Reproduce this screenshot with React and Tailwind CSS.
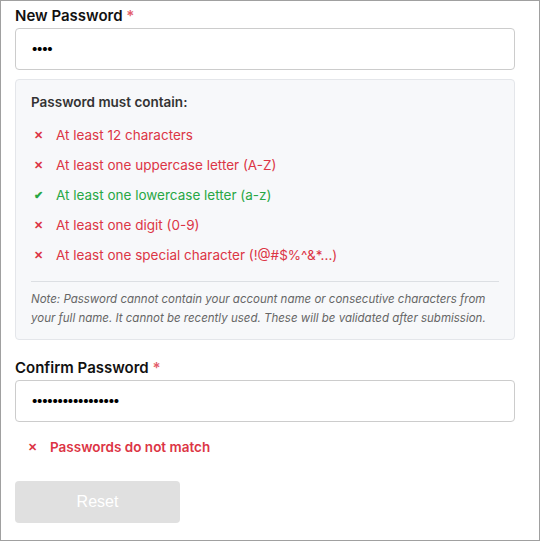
import React from "react";

const rules = [
  { ok: false, text: "At least 12 characters" },
  { ok: false, text: "At least one uppercase letter (A-Z)" },
  { ok: true, text: "At least one lowercase letter (a-z)" },
  { ok: false, text: "At least one digit (0-9)" },
  { ok: false, text: "At least one special character (!@#$%^&*...)" },
];

function Label({ children }) {
  return (
    <div className="text-[15px] font-semibold leading-5 text-[#111]">
      {children} <span className="text-[#e35d6a]">*</span>
    </div>
  );
}

function PasswordBox({ dots }) {
  return (
    <div className="h-[42px] rounded-[4px] border border-[#cccccc] bg-white flex items-center px-[15px] text-[13px] text-black tracking-[-2.2px]">
      {"•".repeat(dots)}
    </div>
  );
}

export default function App() {
  return (
    <div
      className="w-[540px] h-[541px] border border-[#a0a0a0] bg-white pl-[14px] pt-[5px]"
      style={{ fontFamily: "Inter, 'Noto Sans', sans-serif" }}
    >
      <div className="w-[500px]">
        <Label>New Password</Label>
        <div className="mt-[2px]">
          <PasswordBox dots={4} />
        </div>

        {/* requirements */}
        <div className="mt-[9px] rounded-[4px] border border-[#e4e6ea] bg-[#f7f8fa] px-[15px] pt-[13px] pb-[11px]">
          <div className="text-[13.5px] font-semibold leading-[18px] text-[#333]">
            Password must contain:
          </div>
          <ul className="mt-[9px]">
            {rules.map((r) => (
              <li
                key={r.text}
                className={`flex items-center leading-[30px] text-[13.5px] ${
                  r.ok ? "text-[#28a745]" : "text-[#dc3545]"
                }`}
              >
                <span className="w-[25px] pl-[3px] text-[11px] font-bold">
                  {r.ok ? "✔" : "✕"}
                </span>
                <span>{r.text}</span>
              </li>
            ))}
          </ul>
          <div className="mt-[11px] border-t border-[#dcdfe3]" />
          <p className="mt-[8px] text-[11.5px] italic leading-[19px] text-[#666]">
            Note: Password cannot contain your account name or consecutive characters from your
            full name. It cannot be recently used. These will be validated after submission.
          </p>
        </div>

        <div className="mt-[18px]">
          <Label>Confirm Password</Label>
        </div>
        <div className="mt-[2px]">
          <PasswordBox dots={17} />
        </div>

        <div className="mt-[15px] flex items-center leading-5 text-[13.5px] font-semibold text-[#dc3545]">
          <span className="w-[35px] pl-[13px] text-[11px] font-bold">✕</span>
          <span>Passwords do not match</span>
        </div>

        <button
          type="button"
          disabled
          className="mt-[24px] w-[165px] h-[42px] rounded-[4px] bg-[#e0e0e0] text-white text-[16px]"
          style={{ fontFamily: "'Liberation Sans', Arial, sans-serif" }}
        >
          Reset
        </button>
      </div>
    </div>
  );
}
